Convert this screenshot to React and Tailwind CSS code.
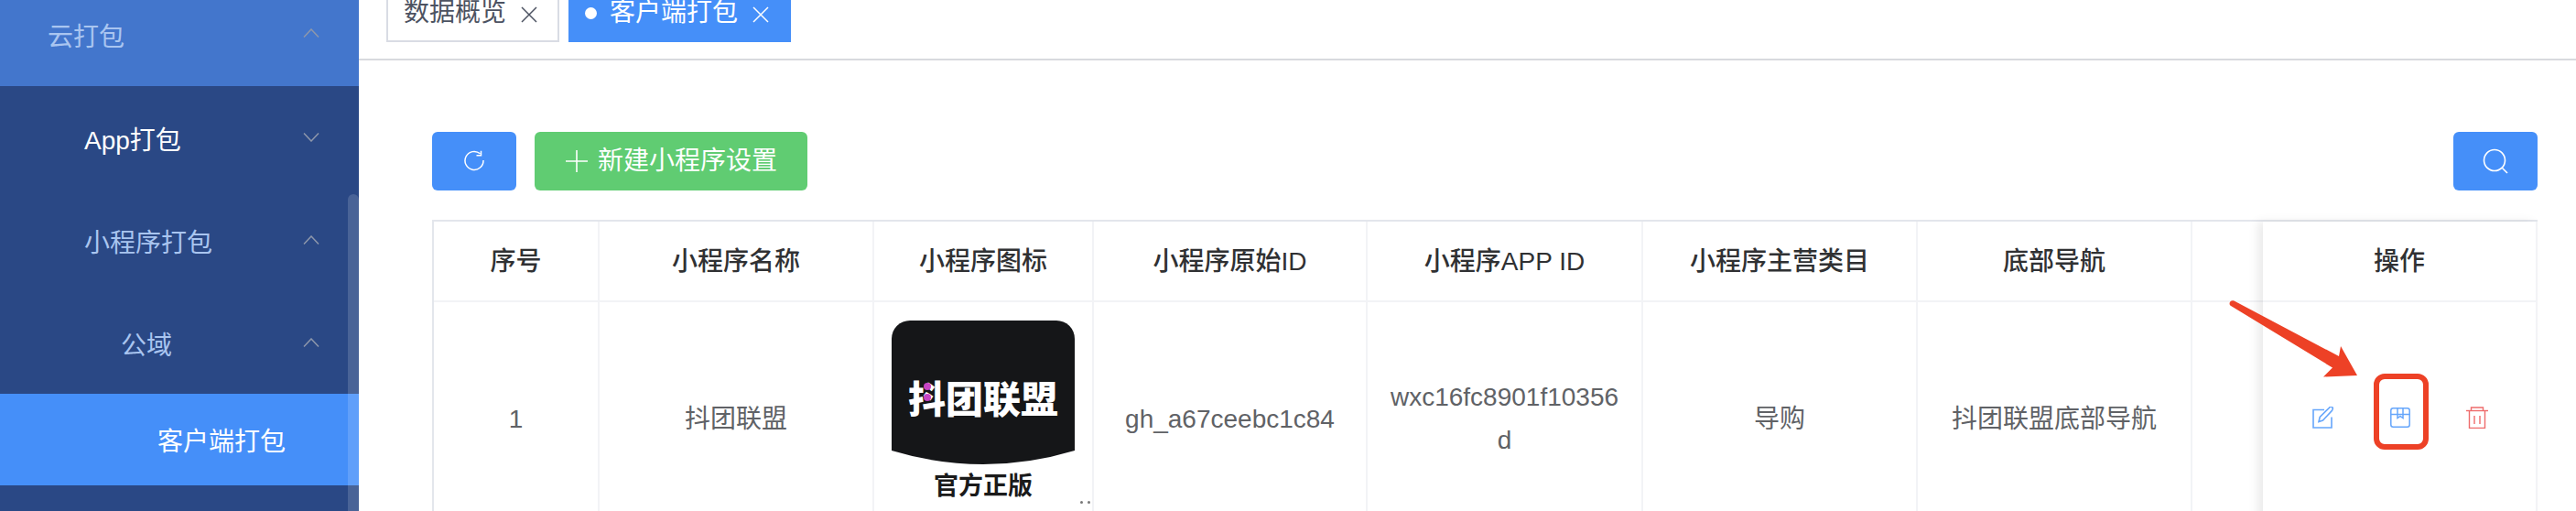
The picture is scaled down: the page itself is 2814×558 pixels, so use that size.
const columns = [
  { label: "序号", value: "1", width: "w-[181px]" },
  { label: "小程序名称", value: "抖团联盟", width: "w-[300px]" },
  { label: "小程序图标", logo: true, width: "w-[240px]" },
  { label: "小程序原始ID", value: "gh_a67ceebc1c84", width: "w-[299px]" },
  { label: "小程序APP ID", value: "wxc16fc8901f10356d", width: "w-[301px]" },
  { label: "小程序主营类目", value: "导购", width: "w-[300px]" },
  { label: "底部导航", value: "抖团联盟底部导航", width: "w-[300px]" },
  { label: "", value: "", width: "w-[300px]" },
];

const Chevron = ({ up }) => (
  <svg width="18" height="10" viewBox="0 0 18 10" fill="none" stroke="#8d97ab" strokeWidth="1.5">
    <path d={up ? "M1 9.5 9 1l8 8.500" : "M1 .5 9 9l8-8.500"} />
  </svg>
);

const CloseIcon = ({ className }) => (
  <svg className={className} width="18" height="18" viewBox="0 0 18 18" fill="none" stroke="currentColor" strokeWidth="1.5">
    <path d="M1 1l16 16M17 1 1 17" />
  </svg>
);

const RefreshIcon = () => (
  <svg width="24" height="24" viewBox="0 0 24 24" fill="none" stroke="currentColor" strokeWidth="1.5">
    <path d="M18.500 3.800A10 10 0 1 0 22 11" />
    <path d="M14.500 5.800h5V.8" />
  </svg>
);

const SearchIcon = () => (
  <svg width="28" height="28" viewBox="0 0 28 28" fill="none" stroke="currentColor" strokeWidth="1.6">
    <circle cx="13" cy="13" r="11.500" />
    <path d="M21.500 21.500 27 27" />
  </svg>
);

const PlusIcon = () => (
  <svg className="mr-[11px] shrink-0" width="24" height="24" viewBox="0 0 24 24" fill="none" stroke="currentColor" strokeWidth="1.6">
    <path d="M12 0v24M0 12h24" />
  </svg>
);

const MenuItem = ({ label, indent, open, tone }) => (
  <div className={`flex h-[112px] items-center justify-between pr-[43px] pt-[7px] ${indent} ${tone}`}>
    <span>{label}</span>
    <div className="-mt-[8px]">
      <Chevron up={open} />
    </div>
  </div>
);

const Sidebar = () => (
  <aside className="relative h-full w-[392px] shrink-0 overflow-hidden bg-[#2a4885] text-[28px] leading-[32px]">
    <div className="flex h-[94px] items-start justify-between bg-[#4376cc] pl-[52px] pr-[43px] pt-[25px] text-[#a9c5f0]">
      <span>云打包</span>
      <div className="pt-[6px]">
        <Chevron up />
      </div>
    </div>
    <MenuItem label="App打包" indent="pl-[92px]" tone="text-white" />
    <MenuItem label="小程序打包" indent="pl-[92px]" open tone="text-[#a9c5f0]" />
    <MenuItem label="公域" indent="pl-[132px]" open tone="text-[#a9c5f0]" />
    <div className="flex h-[100px] items-center bg-[#458ff9] pl-[172px] pt-[6px] text-white">客户端打包</div>
    <div className="absolute bottom-0 right-0 top-[212px] w-[12px] rounded-t-md bg-white/15" />
  </aside>
);

const Tabs = () => (
  <div className="flex h-[66px] shrink-0 gap-[10px] border-b-2 border-[#d8dade] pl-[30px] text-[28px] leading-[28px]">
    <div className="flex h-[46px] w-[189px] items-start border-x-2 border-b-2 border-[#d9dce4] pl-[17px] text-[#4c5261]">
      <span>数据概览</span>
      <CloseIcon className="ml-[16px] mt-[7px] shrink-0" />
    </div>
    <div className="flex h-[46px] w-[243px] items-start bg-[#458ff9] pl-[18px] text-white">
      <span className="mr-[14px] mt-[8px] h-[13px] w-[13px] rounded-full bg-white" />
      <span>客户端打包</span>
      <CloseIcon className="ml-[16px] mt-[7px] shrink-0" />
    </div>
  </div>
);

const Toolbar = () => (
  <div className="flex h-[64px] items-stretch justify-between">
    <div className="flex gap-[20px]">
      <button className="flex w-[92px] items-center justify-center rounded-md bg-[#458ff9] text-white">
        <RefreshIcon />
      </button>
      <button className="flex w-[298px] items-center rounded-md bg-[#60cc72] pl-[34px] text-[28px] text-white">
        <PlusIcon />
        新建小程序设置
      </button>
    </div>
    <button className="flex w-[92px] items-center justify-center rounded-md bg-[#458ff9] text-white">
      <SearchIcon />
    </button>
  </div>
);

const Logo = () => (
  <div className="relative flex h-full flex-col items-center pt-[20px]">
    <svg width="200" height="157" viewBox="0 0 200 157">
      <path d="M20 0h160a20 20 0 0 1 20 20v122Q100 172 0 142V20A20 20 0 0 1 20 0z" fill="#151618" />
      <text x="100" y="101" textAnchor="middle" fontSize="41" fontWeight="900" fill="#fff">
        抖团联盟
      </text>
      <circle cx="39" cy="72" r="4" fill="#c644c4" />
      <circle cx="39" cy="84" r="4" fill="#c644c4" />
    </svg>
    <span className="mt-[8px] text-[27px] font-bold leading-[32px] text-[#1a1a1a]">官方正版</span>
    <span className="absolute left-[225px] top-[217px] h-[3px] w-[3px] rounded-full bg-[#777]" />
    <span className="absolute left-[233px] top-[217px] h-[3px] w-[3px] rounded-full bg-[#777]" />
  </div>
);

const Column = ({ column }) => (
  <div className={`${column.width} shrink-0 border-r-2 border-[#f2f3f6]`}>
    <div className="flex h-[88px] items-center justify-center border-b-2 border-[#f2f3f6] pt-[2px] font-medium text-[#303133]">
      {column.label}
    </div>
    {column.logo ? (
      <div className="h-[254px]">
        <Logo />
      </div>
    ) : (
      <div className="flex h-[254px] items-center justify-center break-all px-[21px] text-center leading-[47px] text-[#606266]">
        {column.value}
      </div>
    )}
  </div>
);

const PenIcon = () => (
  <svg width="24" height="24" viewBox="0 0 24 24" fill="none" stroke="#66a6fb" strokeWidth="1.6">
    <path d="M13 3.500H1v19.500h20V11.500" />
    <path d="M7 16.500l1.200-5L18.500 1.200a1.800 1.800 0 0 1 3.500 1.800c0 .6-.2 1-.6 1.400L11.500 15z" />
  </svg>
);

const PackageIcon = () => (
  <svg width="22" height="22" viewBox="0 0 22 22" fill="none" stroke="#66a6fb" strokeWidth="1.5">
    <rect x=".8" y=".8" width="20.400" height="20.400" rx="2.500" />
    <path d="M.8 7.500h20.400" />
    <path d="M8 1v10.500l3-2 3 2V1" />
  </svg>
);

const TrashIcon = () => (
  <svg width="24" height="24" viewBox="0 0 24 24" fill="none" stroke="#ee6b6b" strokeWidth="1.4">
    <path d="M0 4.500h24" />
    <path d="M5.500 4.500V1h13v3.500" />
    <path d="M3.500 4.500v19h17v-19" />
    <path d="M9 10v9M15 10v9" />
  </svg>
);

const ActionColumn = () => (
  <div className="relative z-10 w-[300px] shrink-0 border-r-2 border-[#f2f3f6] bg-white shadow-[-6px_0_10px_rgba(0,0,0,0.08)]">
    <div className="flex h-[88px] items-center justify-center border-b-2 border-[#f2f3f6] pt-[2px] font-medium text-[#303133]">
      操作
    </div>
    <div className="flex h-[254px] items-start pl-[54px] pt-[114px]">
      <PenIcon />
      <div className="ml-[61px] pt-[1px]">
        <PackageIcon />
      </div>
      <div className="ml-[61px]">
        <TrashIcon />
      </div>
    </div>
  </div>
);

const Annotation = () => (
  <>
    <svg className="absolute left-[2430px] top-[325px] z-20" width="150" height="92" viewBox="0 0 150 92">
      <path
        d="M10.500 3.500 125 64l2-11 18 32-37 1.500 10-10L7 9c-3-2-1-7 3.500-5.500z"
        fill="#ed4126"
      />
    </svg>
    <div className="absolute left-[2593px] top-[408px] z-20 h-[83px] w-[60px] rounded-[12px] border-[6px] border-[#ed4126]" />
  </>
);

export default function App() {
  return (
    <div className="relative flex h-[558px] w-[2814px] overflow-hidden bg-white text-[28px] [font-family:'Liberation_Sans','Noto_Sans_CJK_SC',sans-serif]">
      <Sidebar />
      <main className="flex min-w-0 flex-1 flex-col">
        <Tabs />
        <div className="pl-[80px] pr-[42px] pt-[78px]">
          <Toolbar />
          <div className="mt-[32px] flex border-l-2 border-t-2 border-[#e3e6ec]">
            <div className="flex min-w-0 flex-1 overflow-hidden">
              {columns.map((column) => (
                <Column key={column.label || "empty"} column={column} />
              ))}
            </div>
            <ActionColumn />
          </div>
        </div>
      </main>
      <Annotation />
    </div>
  );
}
